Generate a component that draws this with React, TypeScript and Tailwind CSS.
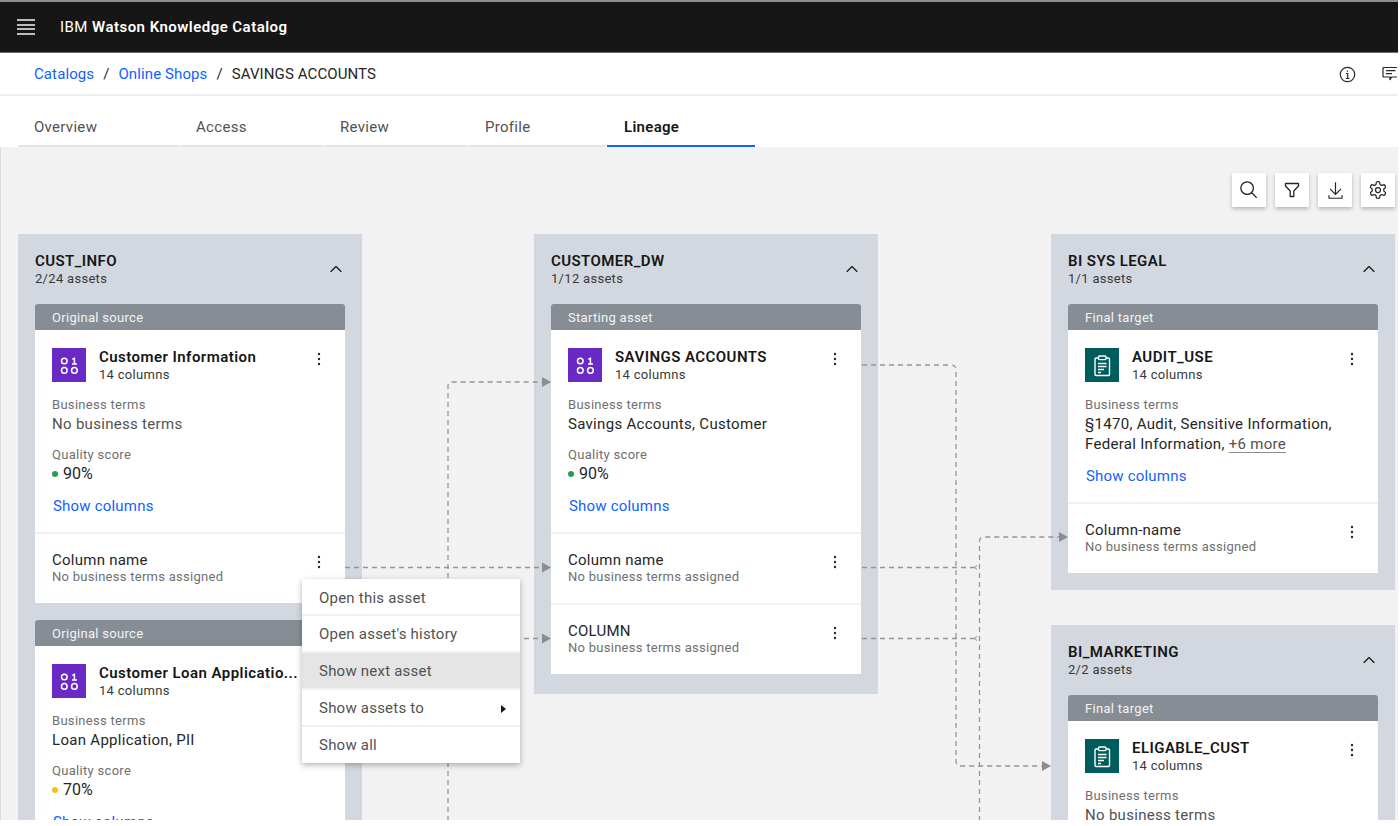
import { ChevronUp } from 'lucide-react';

type CardData = {
  tag: string;
  kind: 'data' | 'report';
  title: string;
  terms: React.ReactNode;
  termsDark?: boolean;
  score?: { value: string; color: string };
  showColumns?: boolean;
  rows?: { name: string }[];
};

type GroupData = { name: string; count: string; pb: string; cards: CardData[] };

const tabs = [
  { label: 'Overview', w: 'w-[161px]' },
  { label: 'Access', w: 'w-[143px]' },
  { label: 'Review', w: 'w-[144px]' },
  { label: 'Profile', w: 'w-[137px]' },
];

function Kebab() {
  return (
    <svg width="16" height="16" viewBox="0 0 16 16" className="shrink-0 text-[#262626]">
      <circle cx="8" cy="3" r="1.2" fill="currentColor" />
      <circle cx="8" cy="8" r="1.2" fill="currentColor" />
      <circle cx="8" cy="13" r="1.2" fill="currentColor" />
    </svg>
  );
}

function DataIcon() {
  return (
    <div className="w-[34px] h-[34px] bg-[#6929c4] shrink-0">
      <svg width="34" height="34" viewBox="0 0 34 34" fill="none" stroke="white" strokeWidth="1.5">
        <circle cx="12.3" cy="13" r="2.8" />
        <circle cx="12.3" cy="22.4" r="2.8" />
        <circle cx="22.4" cy="22.4" r="2.8" />
        <path d="M20.4 11.2 22.4 10.4V16M20 16H25" />
      </svg>
    </div>
  );
}

function ReportIcon() {
  return (
    <div className="w-[34px] h-[34px] bg-[#005d5d] shrink-0">
      <svg width="34" height="34" viewBox="0 0 34 34" fill="none" stroke="white" strokeWidth="1.4">
        <rect x="10" y="10" width="14.5" height="17.5" rx="1" />
        <rect x="13.5" y="8" width="7.5" height="3.6" rx="1" fill="#005d5d" />
        <path d="M13 15.5H21.5M13 18.5H21.5M13 21.5H19M13 24.5H16" />
      </svg>
    </div>
  );
}

function ColumnRow({ name }: { name: string }) {
  return (
    <div className="flex justify-between border-t-2 border-[#f0f0f0] pl-[17px] pr-[18px] pt-[17px] h-[71px] bg-white">
      <div>
        <div className="text-[15px] leading-[18px] tracking-[0.25px] text-[#262626]">{name}</div>
        <div className="text-[13px] leading-[16px] tracking-[0.27px] text-[#6f6f6f]">No business terms assigned</div>
      </div>
      <div className="mt-[3px]"><Kebab /></div>
    </div>
  );
}

function AssetCard({ card }: { card: CardData }) {
  return (
    <div>
      <div className="h-[26px] rounded-t-[3px] bg-[#868d95] pl-[17px] text-[13px] leading-[27px] tracking-[0.3px] text-[#f4f4f4]">{card.tag}</div>
      <div className="bg-white px-[17px] pt-[18px] pb-[16px]">
        <div className="flex">
          {card.kind === 'data' ? <DataIcon /> : <ReportIcon />}
          <div className="ml-[13px] flex-1 min-w-0">
            <div className="text-[15px] leading-[18px] tracking-[0.45px] font-semibold text-[#161616] whitespace-nowrap">{card.title}</div>
            <div className="text-[13px] leading-[18px] tracking-[0.3px] text-[#393939]">14 columns</div>
          </div>
          <div className="mr-px mt-[3px]"><Kebab /></div>
        </div>
        <div className="mt-[12px] text-[13px] leading-[18px] tracking-[0.3px] text-[#6f6f6f]">Business terms</div>
        <div className={`text-[15px] leading-[20px] tracking-[0.3px] ${card.termsDark ? 'text-[#262626]' : 'text-[#525252]'}`}>{card.terms}</div>
        {card.score && (
          <>
            <div className="mt-[12px] text-[13px] leading-[18px] tracking-[0.3px] text-[#6f6f6f]">Quality score</div>
            <div className="flex items-center text-[16px] leading-[20px] text-[#262626]">
              <span className="w-[6px] h-[6px] rounded-full mr-[5px]" style={{ backgroundColor: card.score.color }} />
              {card.score.value}
            </div>
          </>
        )}
        {card.showColumns && <div className="mt-[12px] ml-px text-[15px] leading-[20px] tracking-[0.2px] text-[#0f62fe]">Show columns</div>}
      </div>
      {card.rows?.map((r) => <ColumnRow key={r.name} name={r.name} />)}
    </div>
  );
}

function Group({ group }: { group: GroupData }) {
  return (
    <div className={`bg-[#d3d8e0] px-[17px] pt-[18px] ${group.pb}`}>
      <div className="flex justify-between pb-[16px]">
        <div>
          <div className="text-[15px] leading-[18px] tracking-[0.42px] font-semibold text-[#161616]">{group.name}</div>
          <div className="text-[13px] leading-[18px] tracking-[0.3px] text-[#393939]">{group.count}</div>
        </div>
        <ChevronUp size={20} strokeWidth={1.4} className="mt-[7px] -mr-[1px] text-[#161616]" />
      </div>
      <div className="flex flex-col gap-[17px]">
        {group.cards.map((c) => <AssetCard key={c.title} card={c} />)}
      </div>
    </div>
  );
}

const leftGroups: GroupData[] = [
  {
    name: 'CUST_INFO', count: '2/24 assets', pb: 'pb-[17px]',
    cards: [
      { tag: 'Original source', kind: 'data', title: 'Customer Information', terms: 'No business terms', score: { value: '90%', color: '#24a148' }, showColumns: true, rows: [{ name: 'Column name' }] },
      { tag: 'Original source', kind: 'data', title: 'Customer Loan Applicatio...', terms: 'Loan Application, PII', termsDark: true, score: { value: '70%', color: '#f1c21b' }, showColumns: true },
    ],
  },
];

const midGroups: GroupData[] = [
  {
    name: 'CUSTOMER_DW', count: '1/12 assets', pb: 'pb-[20px]',
    cards: [
      { tag: 'Starting asset', kind: 'data', title: 'SAVINGS ACCOUNTS', terms: 'Savings Accounts, Customer', termsDark: true, score: { value: '90%', color: '#24a148' }, showColumns: true, rows: [{ name: 'Column name' }, { name: 'COLUMN' }] },
    ],
  },
];

const rightGroups: GroupData[] = [
  {
    name: 'BI SYS LEGAL', count: '1/1 assets', pb: 'pb-[17px]',
    cards: [
      {
        tag: 'Final target', kind: 'report', title: 'AUDIT_USE', termsDark: true, showColumns: true, rows: [{ name: 'Column-name' }],
        terms: <>§1470, Audit, Sensitive Information, Federal Information, <span className="text-[#525252] underline underline-offset-[3px] decoration-[#8d8d8d]">+6 more</span></>,
      },
    ],
  },
  {
    name: 'BI_MARKETING', count: '2/2 assets', pb: 'pb-[17px]',
    cards: [
      { tag: 'Final target', kind: 'report', title: 'ELIGABLE_CUST', terms: 'No business terms', showColumns: true },
    ],
  },
];

function Connectors() {
  const dash = { fill: 'none', stroke: '#969696', strokeWidth: 1.3, strokeDasharray: '5 4' };
  return (
    <svg className="absolute left-0 top-0 z-10 pointer-events-none" width="1397" height="673" viewBox="1 147 1397 673">
      <path {...dash} d="M345 567.5H542" />
      <path {...dash} d="M448 830V386Q448 382 452 382H542" />
      <path {...dash} d="M362 638.5H542" />
      <path {...dash} d="M862 365H951Q956 365 956 370V761Q956 766 961 766H1042" />
      <path {...dash} d="M862 567.5H979M862 638.5H979" />
      <path {...dash} d="M979.5 830V541Q979.5 537 984 537H1059" />
      <path d="M977 565.5 974.5 567.5 977 569.5M977 636.5 974.5 638.5 977 640.5" fill="none" stroke="#8d8d8d" strokeWidth="1" />
      <path d="M542 377V387L551 382ZM542 562.5V572.5L551 567.5ZM542 633.5V643.5L551 638.5ZM1042 761V771L1051 766ZM1059 532V542L1068 537Z" fill="#8d8d8d" />
    </svg>
  );
}

function ContextMenu() {
  const itemCls = 'flex items-center justify-between h-[37px] pt-[2px] pl-[17px] pr-[14px] text-[15px] tracking-[0.22px] text-[#525252] border-b-2 border-[#f0f0f0] first:pt-[3px] last:border-b-0 last:h-[36px] last:pt-0';
  return (
    <div className="absolute left-[301px] top-[432px] z-20 w-[218px] bg-white shadow-[0_2px_6px_rgba(0,0,0,0.3)]">
      <div className={itemCls}>Open this asset</div>
      <div className={itemCls}>Open asset's history</div>
      <div className={`${itemCls} bg-[#e5e5e5]`}>Show next asset</div>
      <div className={itemCls}>
        Show assets to
        <svg width="5" height="8" viewBox="0 0 5 8"><path d="M0 0 5 4 0 8Z" fill="#161616" /></svg>
      </div>
      <div className={itemCls}>Show all</div>
    </div>
  );
}

function ToolButton({ children }: { children: React.ReactNode }) {
  return (
    <button className="flex items-center justify-center w-[34px] h-[34px] bg-white shadow-[0_2px_4px_rgba(0,0,0,0.25)] text-[#262626]">
      {children}
    </button>
  );
}

export default function App() {
  return (
    <div className="w-[1400px] h-[826px] bg-white overflow-hidden font-[Roboto,sans-serif] flex flex-col">
      {/* top bar */}
      <div className="h-[53px] shrink-0 w-[1398px] bg-[#161616] border-t-2 border-b border-t-[#8d8d8d] border-b-[#6f6f6f] flex items-center">
        <div className="ml-[17px] w-[18px] flex flex-col gap-[2.6px]">
          <span className="h-[2px] bg-[#bdbdbd]" />
          <span className="h-[2px] bg-[#bdbdbd]" />
          <span className="h-[2px] bg-[#bdbdbd]" />
          <span className="h-[2px] bg-[#bdbdbd]" />
        </div>
        <div className="ml-[25px] text-[15px] tracking-[0.46px] text-white">IBM <span className="font-semibold">Watson Knowledge Catalog</span></div>
      </div>

      {/* breadcrumb */}
      <div className="h-[43px] shrink-0 w-[1397px] pt-[2px] flex items-center justify-between overflow-hidden border-b-2 border-[#eeeeee]">
        <div className="ml-[34px] flex text-[15px] tracking-[0.1px]">
          <span className="text-[#0f62fe]">Catalogs</span>
          <span className="mx-[9px] text-[#262626]">/</span>
          <span className="text-[#0f62fe]">Online Shops</span>
          <span className="mx-[9px] text-[#262626]">/</span>
          <span className="text-[#262626]">SAVINGS ACCOUNTS</span>
        </div>
        <div className="flex items-center gap-[26px] -mr-[2px] text-[#262626]">
          <svg width="17" height="17" viewBox="0 0 17 17" fill="none" stroke="currentColor" strokeWidth="1.2">
            <circle cx="8.5" cy="8.5" r="7.2" />
            <path d="M7 7.5H8.7V12.5M6.8 12.5H10.5M8.4 4.4V5.8" />
          </svg>
          <svg width="17" height="17" viewBox="0 0 17 17" fill="none" stroke="currentColor" strokeWidth="1.2" className="shrink-0">
            <path d="M2 1.5H15.5Q16.5 1.5 16.5 2.5V10Q16.5 11 15.5 11H9.5L8 14V11H2Q1 11 1 10V2.5Q1 1.5 2 1.5Z" />
            <path d="M4 4.7H13.5M4 7.7H10" />
          </svg>
        </div>
      </div>

      {/* tabs */}
      <div className="h-[51px] shrink-0 flex items-end pl-[18px] gap-px">
        {tabs.map((t) => (
          <div key={t.label} className={`${t.w} h-[51px] border-b-2 border-[#e5e5e5] pl-[16px] pt-[21px] text-[15px] leading-[20px] tracking-[0.3px] text-[#525252]`}>{t.label}</div>
        ))}
        <div className="w-[148px] h-[51px] border-b-2 border-[#0f62fe] pl-[17px] pt-[21px] text-[15px] leading-[20px] tracking-[0.3px] font-semibold text-[#161616]">Lineage</div>
      </div>

      {/* canvas */}
      <div className="relative h-[673px] shrink-0 w-[1398px] border-l border-[#dcdcdc] bg-[#f2f2f2] overflow-hidden">
        <div className="flex justify-end gap-[9px] pr-[3px] pt-[26px]">
          <ToolButton>
            <svg width="20" height="20" viewBox="0 0 32 32" fill="currentColor"><path d="M29,27.5859l-7.5521-7.5521a11.0177,11.0177,0,1,0-1.4141,1.4141L27.5859,29ZM4,13a9,9,0,1,1,9,9A9.01,9.01,0,0,1,4,13Z" /></svg>
          </ToolButton>
          <ToolButton>
            <svg width="18" height="18" viewBox="0 0 18 18" fill="none" stroke="currentColor" strokeWidth="1.3" strokeLinejoin="round"><path d="M2.5 2.5H15.5V5L10.8 10V15.5H7.2V10L2.5 5Z" /></svg>
          </ToolButton>
          <ToolButton>
            <svg width="19" height="19" viewBox="0 0 32 32" fill="currentColor"><path d="M26,24v4H6V24H4v4H4a2,2,0,0,0,2,2H26a2,2,0,0,0,2-2h0V24Z" /><path d="M26 14 24.59 12.59 17 20.17 17 2 15 2 15 20.17 7.41 12.59 6 14 16 24 26 14z" /></svg>
          </ToolButton>
          <ToolButton>
            <svg width="20" height="20" viewBox="0 0 24 24" fill="none" stroke="currentColor" strokeWidth="1.5" strokeLinecap="round" strokeLinejoin="round"><path d="M12.22 2h-.44a2 2 0 0 0-2 2v.18a2 2 0 0 1-1 1.73l-.43.25a2 2 0 0 1-2 0l-.15-.08a2 2 0 0 0-2.73.73l-.22.38a2 2 0 0 0 .73 2.73l.15.1a2 2 0 0 1 1 1.72v.51a2 2 0 0 1-1 1.74l-.15.09a2 2 0 0 0-.73 2.73l.22.38a2 2 0 0 0 2.73.73l.15-.08a2 2 0 0 1 2 0l.43.25a2 2 0 0 1 1 1.73V20a2 2 0 0 0 2 2h.44a2 2 0 0 0 2-2v-.18a2 2 0 0 1 1-1.73l.43-.25a2 2 0 0 1 2 0l.15.08a2 2 0 0 0 2.73-.73l.22-.39a2 2 0 0 0-.73-2.73l-.15-.08a2 2 0 0 1-1-1.74v-.5a2 2 0 0 1 1-1.74l.15-.09a2 2 0 0 0 .73-2.73l-.22-.38a2 2 0 0 0-2.73-.73l-.15.08a2 2 0 0 1-2 0l-.43-.25a2 2 0 0 1-1-1.73V4a2 2 0 0 0-2-2z" /><circle cx="12" cy="12" r="3" /></svg>
          </ToolButton>
        </div>

        <div className="mt-[27px] ml-[17px] flex items-start gap-[172px]">
          <div className="w-[344px] shrink-0">
            {leftGroups.map((g) => <Group key={g.name} group={g} />)}
          </div>
          <div className="w-[344px] shrink-0">
            {midGroups.map((g) => <Group key={g.name} group={g} />)}
          </div>
          <div className="w-[344px] shrink-0 ml-px flex flex-col gap-[35px]">
            {rightGroups.map((g) => <Group key={g.name} group={g} />)}
          </div>
        </div>

        <Connectors />
        <ContextMenu />
      </div>
    </div>
  );
}
